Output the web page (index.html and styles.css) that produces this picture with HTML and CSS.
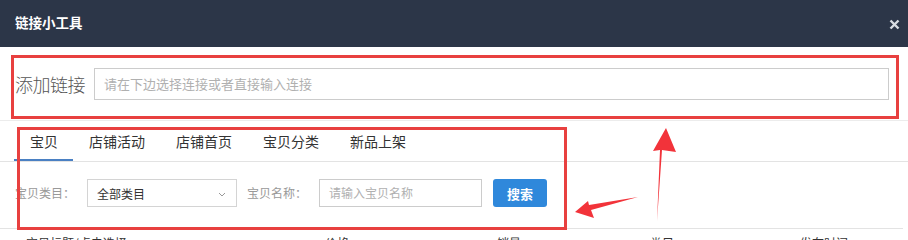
FILE: index.html
```html
<!DOCTYPE html>
<html lang="zh">
<head>
<meta charset="utf-8">
<link rel="stylesheet" href="styles.css">
</head>
<body>
<div class="dialog">
  <div class="header">
    <span class="title">链接小工具</span>
    <svg class="close" width="11" height="11" viewBox="0 0 11 11"><path d="M1.5 1.5 L9.5 9.5 M9.5 1.5 L1.5 9.5" stroke="#d9dde3" stroke-width="2.4" stroke-linecap="butt"/></svg>
  </div>
  <div class="link-row">
    <span class="link-label">添加链接</span>
    <div class="link-input">请在下边选择连接或者直接输入连接</div>
  </div>
  <div class="tabs">
    <span class="tab active">宝贝</span>
    <span class="tab">店铺活动</span>
    <span class="tab">店铺首页</span>
    <span class="tab">宝贝分类</span>
    <span class="tab">新品上架</span>
  </div>
  <div class="filter">
    <span class="f-label">宝贝类目：</span>
    <div class="select"><span>全部类目</span><svg class="chev" width="8" height="5" viewBox="0 0 8 5"><path d="M1 1 L4 4 L7 1" fill="none" stroke="#999" stroke-width="1"/></svg></div>
    <span class="f-label second">宝贝名称：</span>
    <div class="name-input">请输入宝贝名称</div>
    <button class="search">搜索</button>
  </div>
  <div class="thead">
    <span class="th c1">宝贝标题/点击选择</span>
    <span class="th c2">价格</span>
    <span class="th c3">销量</span>
    <span class="th c4">类目</span>
    <span class="th c5">发布时间</span>
  </div>

  <div class="mark mark1"></div>
  <div class="mark mark2"></div>
  <svg class="arrows" width="908" height="240" viewBox="0 0 908 240">
    <polygon points="666,128 653,151 660,150 657,221 662,150 676,152" fill="#f2333a"/>
    <polygon points="575,212 588,201 589,205 638,197 591,210 594,218" fill="#f2333a"/>
  </svg>
</div>
</body>
</html>
```

FILE: styles.css
```css
* { box-sizing: border-box; }
html, body { margin: 0; padding: 0; background: #fff; }
body {
  font-family: "Microsoft YaHei", "Noto Sans CJK SC", "Noto Sans", sans-serif;
  width: 908px;
  height: 240px;
  overflow: hidden;
}
.dialog { position: relative; width: 908px; height: 240px; overflow: hidden; }

.header {
  height: 47px;
  background: #2c3648;
  display: flex;
  align-items: center;
  justify-content: space-between;
  padding: 0 8px 0 15px;
}
.title {
  color: #fff;
  font-size: 13.5px;
  font-weight: bold;
  line-height: 16px;
  margin-top: -3px;
}
.close { margin-top: 2px; }

.link-row {
  height: 74px;
  display: flex;
  align-items: center;
  padding: 0 19px 0 15px;
  border-bottom: 1px solid #ececec;
}
.link-label {
  font-size: 18px;
  font-weight: 300;
  color: #555;
  line-height: 24px;
  width: 79px;
  flex: none;
  letter-spacing: -0.5px;
}
.link-input {
  flex: 1;
  height: 32px;
  border: 1px solid #ccc;
  font-size: 13px;
  color: #b0b0b0;
  line-height: 30px;
  padding-left: 9px;
}

.tabs {
  display: flex;
  height: 41px;
  padding-left: 14px;
  border-bottom: 1px solid #e3e3e3;
}
.tab {
  padding: 0 15px 0 16px;
  font-size: 14px;
  color: #333;
  line-height: 40px;
  height: 40px;
}
.tab.active { border-bottom: 2px solid #4a80c3; padding-right: 15px; }

.filter {
  display: flex;
  padding: 17px 0 0 15px;
  height: 66px;
  align-items: flex-start;
}
.filter > * { flex: none; }
.f-label {
  font-size: 12px;
  color: #999;
  line-height: 28px;
  width: 72px;
}
.f-label.second { width: 72px; margin-left: 10px; }
.select {
  width: 150px;
  height: 28px;
  border: 1px solid #d4d4d4;
  display: flex;
  align-items: center;
  justify-content: space-between;
  padding: 0 10px 0 9px;
  font-size: 12px;
  color: #333;
}
.chev { margin-top: 2px; }
.name-input {
  width: 163px;
  height: 28px;
  border: 1px solid #ccc;
  font-size: 12px;
  color: #b0b0b0;
  line-height: 26px;
  padding-left: 9px;
}
.search {
  margin-left: 11px;
  width: 54px;
  height: 28px;
  border: none;
  border-radius: 3px;
  background: #2f88db;
  color: #fff;
  font-family: inherit;
  font-size: 13px;
  font-weight: bold;
  padding: 0;
}

.thead {
  margin-right: 5px;
  border-top: 1px solid #e3e3e3;
  height: 20px;
  display: flex;
  font-size: 12px;
  color: #333;
  line-height: 16px;
  padding-top: 6px;
}
.th { flex: none; }
.c1 { margin-left: 26px; width: 299px; }
.c2 { width: 172px; }
.c3 { width: 153px; }
.c4 { width: 150px; }

.mark {
  position: absolute;
  border: 3px solid #e8403f;
}
.mark1 { left: 11px; top: 55px; width: 888px; height: 64px; }
.mark2 { left: 17px; top: 127px; width: 550px; height: 103px; }
.arrows { position: absolute; left: 0; top: 0; }
```
